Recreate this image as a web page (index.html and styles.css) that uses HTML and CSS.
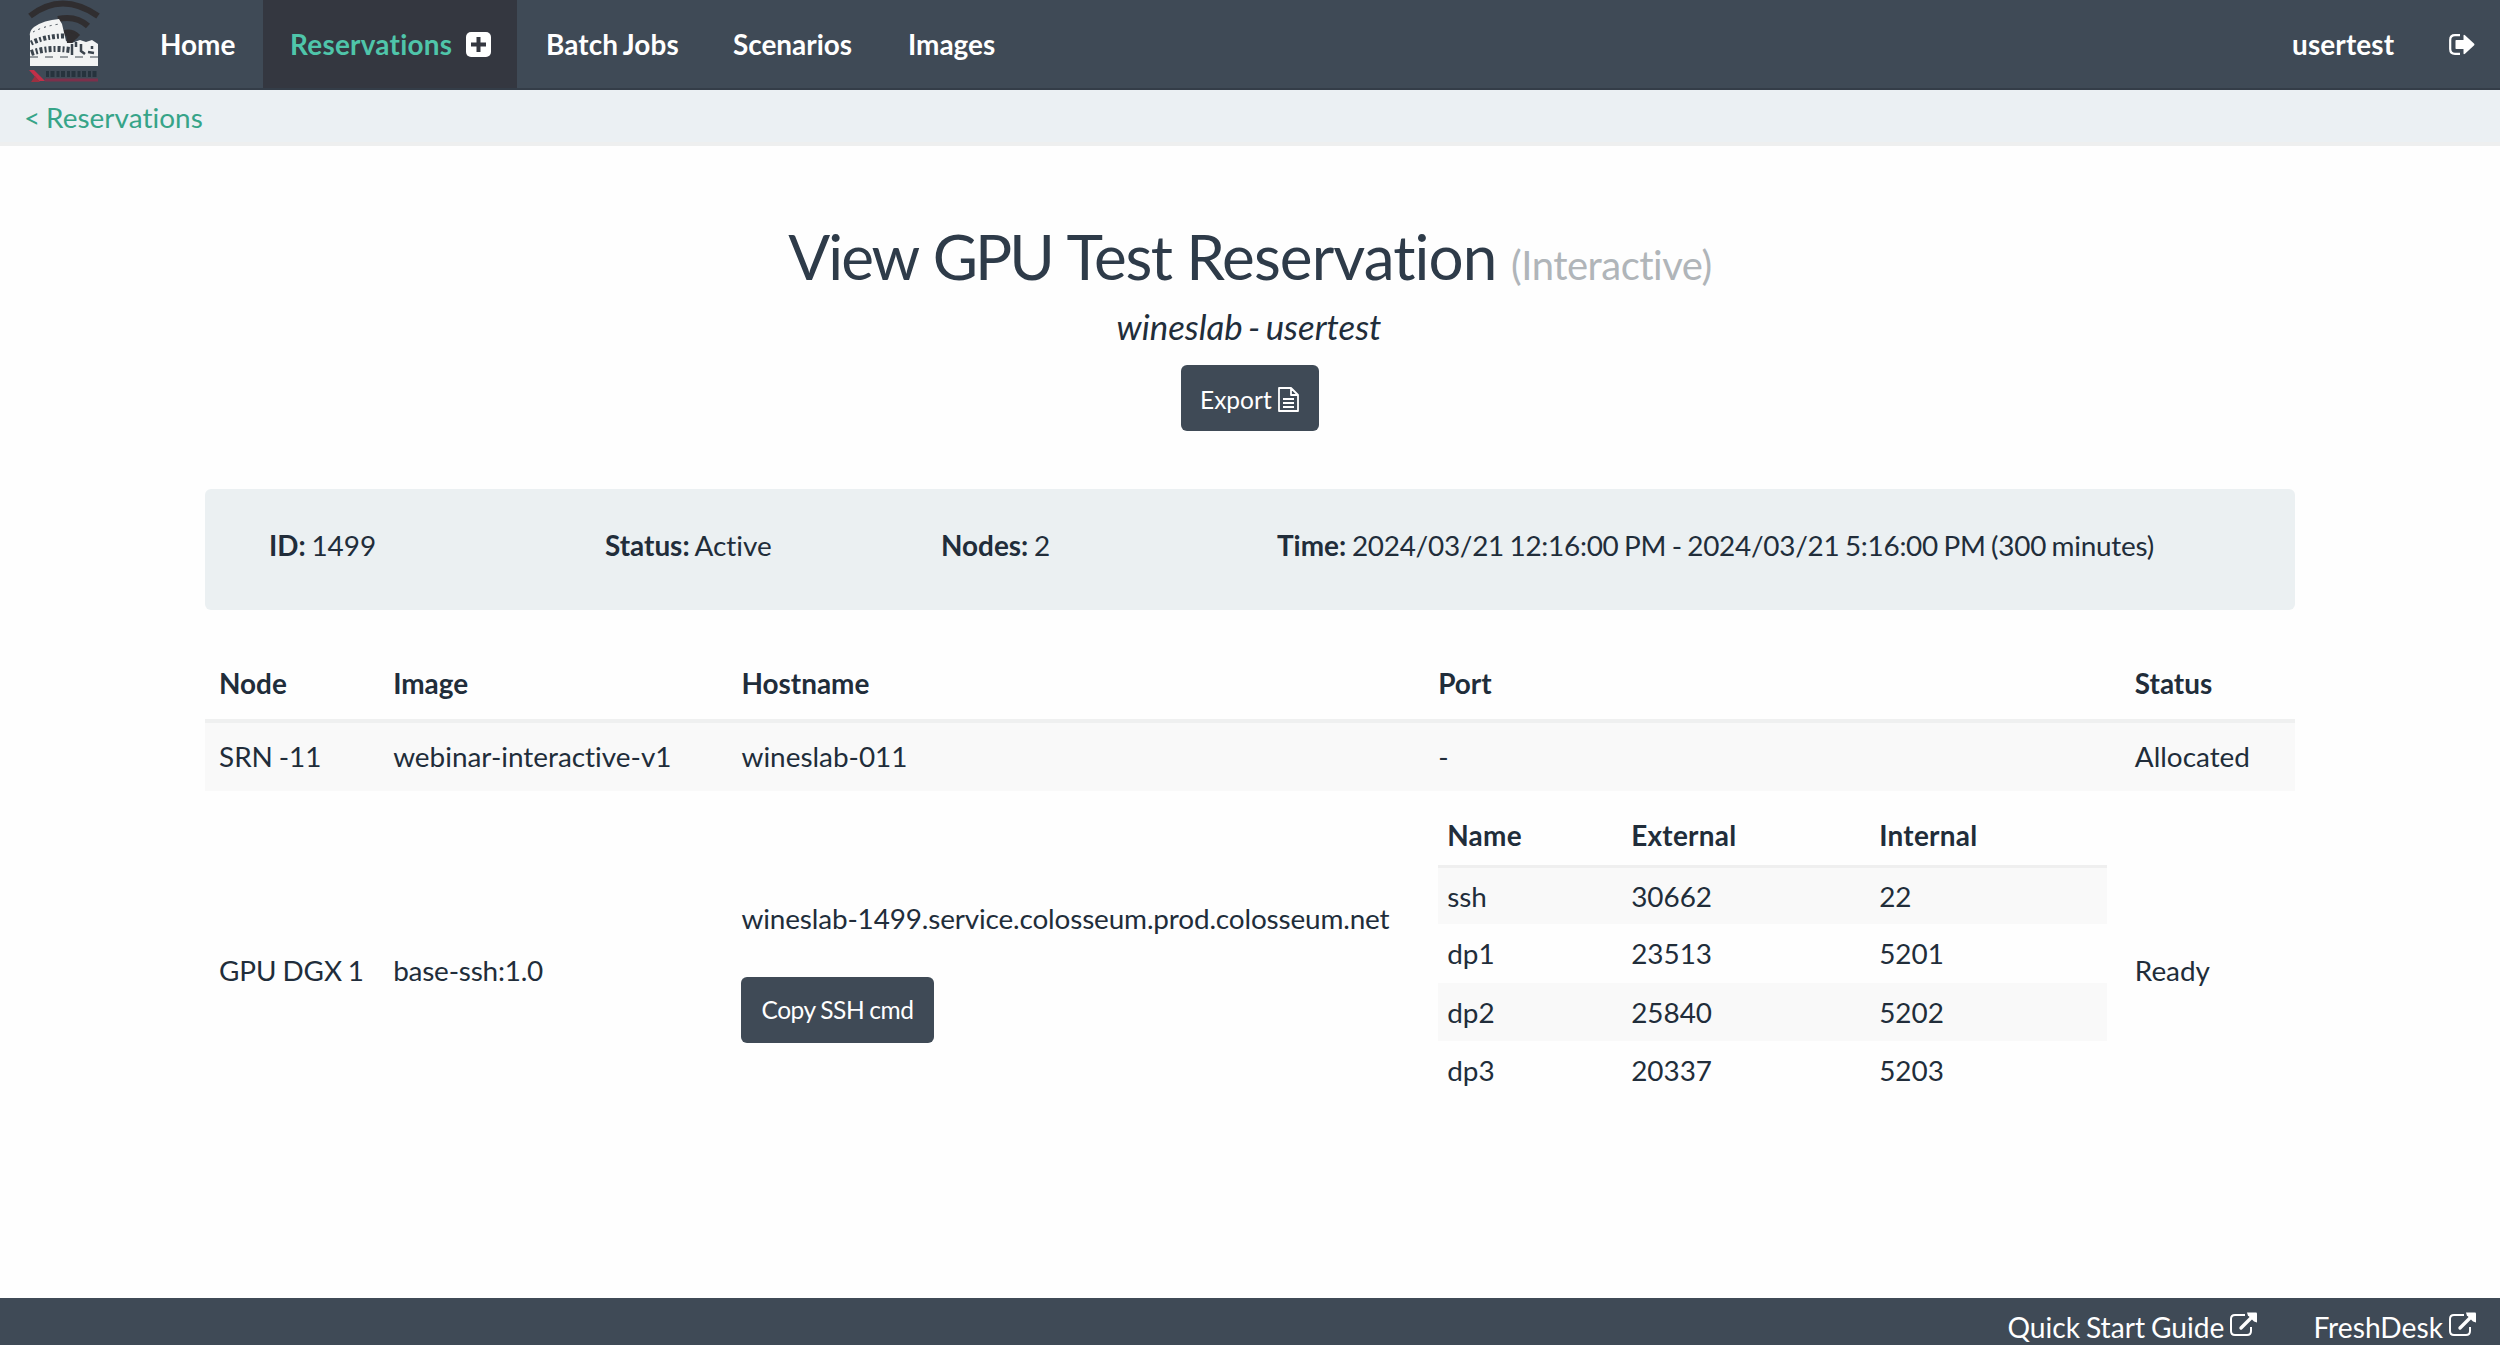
FILE: index.html
```html
<!DOCTYPE html>
<html lang="en">
<head>
<meta charset="utf-8">
<title>View GPU Test Reservation</title>
<link rel="stylesheet" href="styles.css">
</head>
<body>
<svg class="sprite" aria-hidden="true">
  <symbol id="external" viewBox="0 0 28 26">
    <path d="M16 3H6Q2 3 2 7V19Q2 23 6 23H18Q22 23 22 19V15" fill="none" stroke="currentColor" stroke-width="2"/>
    <path d="M12 16L23 5" fill="none" stroke="currentColor" stroke-width="3.4" stroke-linecap="round"/>
    <path d="M18 0.6H27Q28 0.6 28 1.6V10.6L25 9.5L18.8 3.3Z" fill="currentColor"/>
  </symbol>
</svg>
<nav class="navbar">
  <a class="brand" href="#">
    <svg class="logo" viewBox="0 0 72 86">
      <g fill="none" stroke="#302e30" stroke-width="6">
        <path d="M2 16Q34 -9 70 16"/>
        <path d="M30 19Q48 15 60 26"/>
        <path d="M36 33Q44 31 50 37"/>
      </g>
      <path d="M2 66V36Q1 31 6 27Q16 20 31 19L34 24L38 41L44 43L52 40L58 42L64 40L70 44V66Z" fill="#f2f3f3"/>
      <path d="M38 33Q44 31 50 37L44 43H39Z" fill="#302e30"/>
      <g fill="none" stroke="#3b444d">
        <path d="M5 32Q16 26 32 24" stroke-width="1" stroke-dasharray="2 4"/>
        <path d="M3 43Q18 36 37 36" stroke-width="5" stroke-dasharray="2 2 3 2"/>
        <path d="M3 53Q20 47 42 50" stroke-width="6" stroke-dasharray="3 2 2 2"/>
        <path d="M44 44V55M48 42V47M53 44V51L57 54M60 52L66 53M64 46V49" stroke-width="2.5"/>
        <path d="M2 57H70" stroke-width="1" stroke-dasharray="8 7"/>
      </g>
      <path d="M1 70H6L17 81H11Z" fill="#c22f48"/>
      <path d="M3 82L7 76L12 82Z" fill="#9c3040"/>
      <path d="M18 74H70" stroke="#26333d" stroke-width="6" stroke-dasharray="3 1.5 4 2"/>
      <path d="M17 80H70" stroke="#7c304b" stroke-width="3"/>
    </svg>
  </a>
  <a class="item home" href="#">Home</a>
  <a class="item active" href="#"><span>Reservations</span>
    <svg class="plus" viewBox="0 0 25 25"><rect width="25" height="25" rx="5" fill="#fff"/><path d="M12.5 5V20M5 12.5H20" stroke="#343740" stroke-width="4"/></svg>
  </a>
  <a class="item jobs" href="#">Batch Jobs</a>
  <a class="item scenarios" href="#">Scenarios</a>
  <a class="item" href="#">Images</a>
  <div class="right">
    <a class="user" href="#">usertest</a>
    <svg class="logout" viewBox="0 0 26 21"><path d="M11 1.2H6Q1.2 1.2 1.2 6V15Q1.2 19.8 6 19.8H11" fill="none" stroke="#fff" stroke-width="2.2"/><path d="M7 6H14.5V1.8Q14.5 0 16 1.2L25.2 9.7Q25.8 10.5 25.2 11.3L16 19.8Q14.5 21 14.5 19.2V15H7Q6.5 15 6.5 14V7Q6.5 6 7 6Z" fill="#fff"/></svg>
  </div>
</nav>
<div class="crumbs"><a href="#">&lt; Reservations</a></div>
<main>
  <header class="heading">
    <h1><span class="title"><span class="kern-view">View</span> <span class="kern-gpu">GPU</span> <span class="kern-test">Test</span> <span class="kern-res">Reservation</span></span> <small>(Interactive)</small></h1>
    <p class="owner">wineslab - usertest</p>
    <button class="btn export"><span>Export</span>
      <svg viewBox="0 0 21 25"><path d="M1 1H13L20 8V24H1ZM13 1V8H20M5 12H16M5 16H16M5 20H16" fill="none" stroke="#fff" stroke-width="1.8" stroke-linejoin="round"/></svg>
    </button>
  </header>
  <section class="well">
    <div><b>ID:</b> 1499</div>
    <div><b>Status:</b> Active</div>
    <div><b>Nodes:</b> 2</div>
    <div><b>Time:</b> <span class="when">2024/03/21 12:16:00 PM - 2024/03/21 5:16:00 PM (300 minutes)</span></div>
  </section>
  <table class="nodes">
    <colgroup><col class="c1"><col class="c2"><col class="c4"><col class="c4"><col class="c1"></colgroup>
    <thead><tr><th>Node</th><th>Image</th><th>Hostname</th><th>Port</th><th>Status</th></tr></thead>
    <tbody>
      <tr class="striped"><td>SRN -11</td><td>webinar-interactive-v1</td><td>wineslab-011</td><td>-</td><td>Allocated</td></tr>
      <tr>
        <td>GPU DGX 1</td><td class="tag">base-ssh:1.0</td>
        <td><div class="host">wineslab-1499.service.colosseum.prod.colosseum.net</div><button class="btn copy">Copy SSH cmd</button></td>
        <td>
          <table class="ports">
            <colgroup><col class="p1"><col class="p2"><col></colgroup>
            <thead><tr><th>Name</th><th>External</th><th>Internal</th></tr></thead>
            <tbody>
              <tr class="striped"><td>ssh</td><td>30662</td><td>22</td></tr>
              <tr><td>dp1</td><td>23513</td><td>5201</td></tr>
              <tr class="striped"><td>dp2</td><td>25840</td><td>5202</td></tr>
              <tr><td>dp3</td><td>20337</td><td>5203</td></tr>
            </tbody>
          </table>
        </td>
        <td>Ready</td>
      </tr>
    </tbody>
  </table>
</main>
<footer class="footer">
  <a href="#">Quick Start Guide<svg><use href="#external"/></svg></a>
  <a href="#">FreshDesk<svg><use href="#external"/></svg></a>
</footer>
</body>
</html>
```

FILE: styles.css
```css
* { box-sizing: border-box; }
html, body { height: 100%; }
body {
  margin: 0;
  display: flex;
  flex-direction: column;
  overflow: hidden;
  background: #fefefe;
  color: #212d3a;
  font: 27.9px/40px Lato, sans-serif;
  font-variant-ligatures: none;
  word-spacing: -0.05em;
}
a { color: inherit; text-decoration: none; }
svg { display: block; flex: none; }
.sprite { position: absolute; width: 0; height: 0; }

.navbar {
  display: flex;
  height: 90px;
  flex: none;
  background: #3f4a56;
  border-bottom: 2px solid #343d48;
  color: #fff;
  font-weight: 700;
}
.brand { width: 132px; padding: 0 0 0 28px; }
.logo { width: 72px; height: 86px; }
.item { display: flex; align-items: center; height: 88px; padding: 0 28px; white-space: nowrap; }
.home { width: 131px; }
.active { width: 254px; padding: 0 26px 0 27px; justify-content: space-between; background: #343740; color: #4fc5aa; letter-spacing: 0.25px; }
.plus { width: 25px; height: 25px; }
.jobs { width: 188px; padding-left: 29px; letter-spacing: 0.1px; }
.scenarios { width: 175px; }
.right { display: flex; align-items: center; justify-content: space-between; width: 183px; height: 88px; margin: 0 25px 0 auto; }
.user { letter-spacing: 0.15px; }
.logout { width: 26px; height: 21px; margin-top: 1px; }

.crumbs {
  flex: none;
  height: 56px;
  padding: 7px 24px;
  background: #ebf0f3;
  border-bottom: 4px solid #eeefef;
  color: #36a488;
  letter-spacing: 0.05px;
}

main { flex: 1; width: 2090px; margin: 0 auto; }
.heading { display: flex; flex-direction: column; align-items: center; padding-top: 75px; }
h1 { margin: 0; font-size: 62px; font-weight: 400; line-height: 70px; color: #2e3b49; white-space: nowrap; }
h1 small { font-size: 40px; color: #b0b5b9; letter-spacing: -0.5px; }
.kern-view { letter-spacing: -2px; }
.kern-gpu { letter-spacing: -3px; }
.kern-test { letter-spacing: -1.4px; }
.kern-res { letter-spacing: -0.9px; }
.owner { margin: 7px 2px 18px 0; font-size: 34.8px; font-style: italic; line-height: 40px; word-spacing: -0.08em; }
.btn {
  display: flex;
  align-items: center;
  height: 66px;
  padding: 0 20px;
  border: 0;
  border-radius: 6px;
  background: #3f4a56;
  color: #fff;
  font: 24.5px Lato, sans-serif;
  word-spacing: -0.03em;
  white-space: nowrap;
}
.export { width: 138px; padding: 2px 20px 0 19px; justify-content: space-between; }
.export svg { width: 21px; height: 25px; }
.copy { width: 193px; letter-spacing: -0.45px; }

.well {
  display: grid;
  grid-template-columns: 336px 336px 336px 1fr;
  height: 121px;
  margin: 58px 0 37px;
  padding: 36px 0 0 64px;
  border-radius: 6px;
  background: #ebf0f2;
  white-space: nowrap;
}
.when { letter-spacing: -0.25px; }

table { width: 100%; border-collapse: collapse; table-layout: fixed; }
th, td { text-align: left; white-space: nowrap; }
.nodes > * > tr > th { height: 74px; padding: 0 14px; border-bottom: 4px solid #eff0f0; }
.nodes > * > tr > td { padding: 14px; }
.nodes > tbody > .striped > td { padding: 13px 14px 15px; }
.c1 { width: 174.17px; }
.c2 { width: 348.33px; }
.c4 { width: 696.67px; }
.striped { background: #f9f9f9; }
.tag { letter-spacing: -0.2px; }
.host { margin-bottom: 39px; letter-spacing: -0.14px; }
.ports { margin-bottom: 36px; }
.ports th { height: 61px; padding: 0 9px; border-bottom: 3px solid #efefef; letter-spacing: 0.3px; }
.ports td { height: 58.3px; padding: 0 9px; }
.p1 { width: 184px; }
.p2 { width: 248px; }

.footer {
  display: flex;
  justify-content: flex-end;
  gap: 56px;
  flex: none;
  height: 47px;
  padding: 9px 24px 0 0;
  background: #3f4a56;
  color: #fff;
  font-size: 28.2px;
}
.footer a { display: flex; gap: 5px; height: 36px; line-height: 40px; }
.footer svg { width: 28px; height: 26px; margin-top: 5px; }
```
